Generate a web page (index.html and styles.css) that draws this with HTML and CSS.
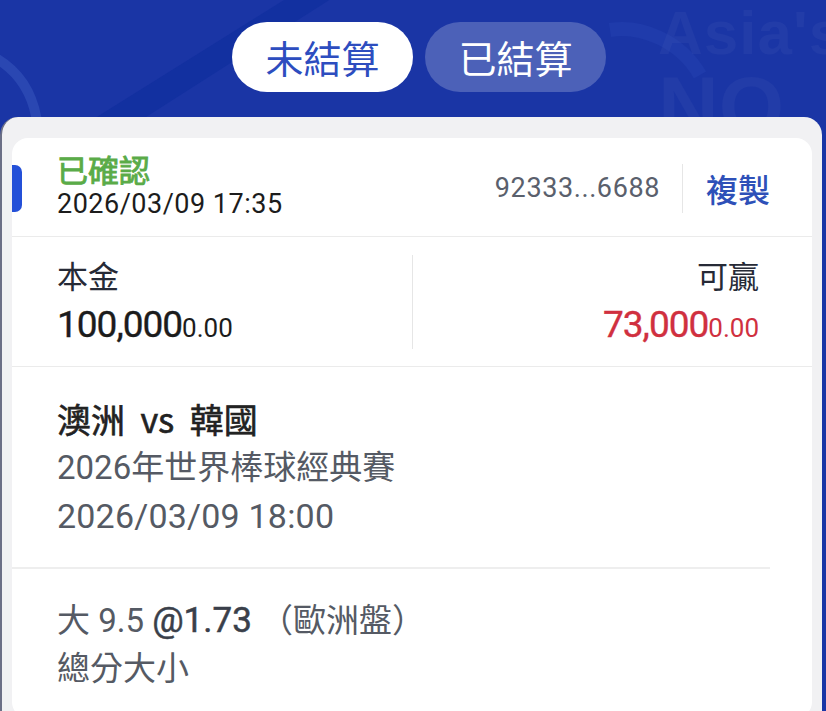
FILE: index.html
```html
<!DOCTYPE html>
<html lang="zh-Hant">
<head>
   <meta charset="UTF-8">
   <meta name="viewport" content="width=device-width, initial-scale=1.0">
   <title>注單</title>
   <link rel="stylesheet" href="styles.css">
</head>
<body>
   <div class="header">
      <svg class="bg-art" width="826" height="117" viewBox="0 0 826 117">
         <path d="M60 140 L300 -10 L345 -10 L110 140 Z" fill="#1230a0"/>
         <path d="M-10 55 C 20 70, 35 95, 38 130" stroke="#2a47b2" stroke-width="10" fill="none"/>
         <path d="M610 30 C 640 25, 680 40, 700 75" stroke="#1f3bab" stroke-width="14" fill="none"/>
      </svg>
      <div class="watermark">
         <span class="wm-top">Asia's</span>
         <span class="wm-bottom">NO</span>
      </div>
      <div class="tabs">
         <div class="tab active">未結算</div>
         <div class="tab">已結算</div>
      </div>
   </div>
   <div class="panel">
      <div class="card">
         <div class="card-head">
            <div class="status">
               <div class="status-label">已確認</div>
               <div class="status-time">2026/03/09 17:35</div>
            </div>
            <div class="order">
               <span class="order-id">92333...6688</span>
               <span class="copy">複製</span>
            </div>
         </div>
         <div class="amounts">
            <div class="amount">
               <div class="amount-label">本金</div>
               <div class="amount-value">100,000<small>0.00</small></div>
            </div>
            <div class="amount right">
               <div class="amount-label">可贏</div>
               <div class="amount-value win">73,000<small>0.00</small></div>
            </div>
         </div>
         <div class="match">
            <div class="match-title">澳洲 vs 韓國</div>
            <div class="match-line">2026年世界棒球經典賽</div>
            <div class="match-line date">2026/03/09 18:00</div>
         </div>
         <div class="bet">
            <div class="bet-line">大 9.5 <b>@1.73</b> （歐洲盤）</div>
            <div class="bet-line">總分大小</div>
         </div>
      </div>
   </div>
</body>
</html>
```
FILE: styles.css
```css
* {
   margin: 0;
   padding: 0;
   box-sizing: border-box;
}
body {
   background-color: #1a35a5;
   font-family: Roboto, "Noto Sans CJK TC", sans-serif;
   overflow: hidden;
}
.header {
   position: relative;
   height: 117px;
   padding-top: 22px;
   overflow: hidden;
}
.bg-art {
   position: absolute;
   left: 0;
   top: 0;
}
.watermark {
   position: absolute;
   left: 658px;
   top: 2px;
   color: rgba(255, 255, 255, 0.035);
   font-family: "Liberation Sans", sans-serif;
   font-weight: bold;
   line-height: 1;
}
.wm-top {
   display: block;
   font-size: 62px;
   letter-spacing: 1px;
}
.wm-bottom {
   display: block;
   font-size: 84px;
}
.tabs {
   position: relative;
   display: flex;
   justify-content: center;
   gap: 12px;
   padding-left: 12px;
}
.tab {
   width: 181px;
   height: 70px;
   border-radius: 35px;
   background-color: rgba(255, 255, 255, 0.22);
   color: #fff;
   font-family: "Noto Sans CJK TC", sans-serif;
   font-size: 38px;
   line-height: 70px;
   text-align: center;
}
.tab.active {
   background-color: #fff;
   color: #2d4dbf;
}
.panel {
   margin-right: 4px;
   min-height: 600px;
   background-color: #f1f1f3;
   border-left: 2px solid #6b6f86;
   border-radius: 18px 18px 0 0;
   padding: 21px 10px 0 10px;
}
.card {
   background-color: #fff;
   border-radius: 16px;
   min-height: 580px;
}
.card-head {
   position: relative;
   height: 99px;
   display: flex;
   align-items: center;
   justify-content: space-between;
   padding: 0 42px 0 45px;
   border-bottom: 1px solid #ebebeb;
}
.card-head::before {
   content: "";
   position: absolute;
   left: 0;
   top: 27px;
   width: 10px;
   height: 47px;
   background-color: #2450d8;
   border-radius: 0 7px 7px 0;
}
.status-label {
   color: #5aab48;
   font-family: "Noto Sans CJK TC", sans-serif;
   font-size: 31px;
   font-weight: 400;
   -webkit-text-stroke: 0.9px #5aab48;
   line-height: 36px;
   margin-top: -2px;
}
.status-time {
   color: #1c1c1c;
   font-size: 27px;
   line-height: 34px;
   letter-spacing: 0.5px;
}
.order {
   display: flex;
   align-items: center;
   margin-top: 2px;
}
.order-id {
   color: #5a606c;
   font-size: 27px;
   letter-spacing: 0.6px;
   padding-right: 22px;
   border-right: 1px solid #e6e6e6;
   line-height: 49px;
}
.copy {
   color: #2e50b8;
   font-family: "Noto Sans CJK TC", sans-serif;
   font-size: 32px;
   font-weight: 500;
   padding-left: 23px;
}
.amounts {
   height: 130px;
   display: flex;
   align-items: center;
   border-bottom: 1px solid #ebebeb;
}
.amount {
   flex: 0 0 401px;
   padding-left: 45px;
   border-right: 1px solid #e6e6e6;
   height: 94px;
   display: flex;
   flex-direction: column;
   justify-content: center;
}
.amount.right {
   flex: 1;
   border-right: none;
   padding: 0 53px 0 0;
   text-align: right;
}
.amount-label {
   color: #262a36;
   font-family: "Noto Sans CJK TC", sans-serif;
   font-size: 31px;
   line-height: 44px;
}
.amount-value {
   color: #1c1c1c;
   font-size: 37px;
   font-weight: 400;
   -webkit-text-stroke: 0.35px #1c1c1c;
   letter-spacing: -1px;
   line-height: 44px;
   margin-top: 6px;
}
.amount-value small {
   font-size: 26px;
   -webkit-text-stroke: 0;
   letter-spacing: 0;
}
.amount-value.win {
   color: #d0303f;
   -webkit-text-stroke-color: #d0303f;
}
.match {
   padding: 27px 45px 26px;
   border-bottom: 2px solid #eeeeee;
   margin-right: 42px;
}
.match-title {
   color: #222;
   font-family: "Noto Sans CJK TC", sans-serif;
   font-size: 34px;
   font-weight: 400;
   -webkit-text-stroke: 0.6px #222;
   word-spacing: 8px;
   line-height: 49px;
}
.match-line {
   color: #555a64;
   font-size: 33px;
   line-height: 49px;
}
.match-line.date {
   font-size: 34px;
   letter-spacing: 0.2px;
}
.bet {
   padding: 28px 45px 0;
}
.bet-line {
   color: #555a64;
   font-size: 33px;
   line-height: 48px;
}
.bet-line b {
   color: #3a3f4a;
   font-size: 35px;
   font-weight: 400;
   -webkit-text-stroke: 0.5px #3a3f4a;
}
```
